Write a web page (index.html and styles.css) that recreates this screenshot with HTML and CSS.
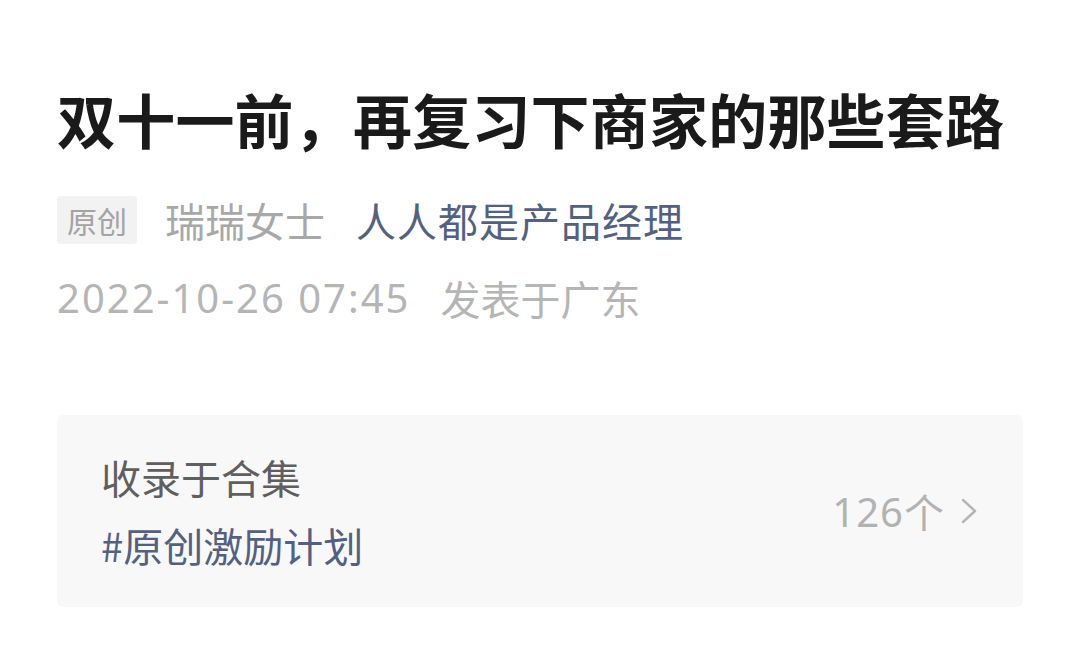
FILE: index.html
```html
<!DOCTYPE html>
<html lang="zh-CN">
<head>
  <meta charset="UTF-8">
  <title>双十一前，再复习下商家的那些套路</title>
  <link rel="stylesheet" href="styles.css">
</head>
<body>

<div class="article">
  <h1 class="title">双十一前，再复习下商家的那些套路</h1>

  <div class="meta">
    <span class="tag">原创</span>
    <span class="author">瑞瑞女士</span>
    <a class="account" href="#">人人都是产品经理</a>
  </div>

  <div class="publish">
    <span class="time">2022-10-26 07:45</span>
    <span class="place">发表于广东</span>
  </div>

  <div class="album">
    <div class="album-info">
      <div class="album-label">收录于合集</div>
      <a class="album-name" href="#">#原创激励计划</a>
    </div>
    <div class="album-count">
      <span class="num">126</span><span>个</span>
      <svg class="arrow" width="18" height="28" viewBox="0 0 18 28">
        <path d="M3 3 L15 14 L3 25" fill="none" stroke="#b5b5b5" stroke-width="2.4" stroke-linecap="round" stroke-linejoin="round"/>
      </svg>
    </div>
  </div>
</div>

</body>
</html>
```

FILE: styles.css
```css
body {
  margin: 0;
  background-color: #fff;
  font-family: "Noto Sans CJK SC", "Noto Sans", sans-serif;
}

.article {
  padding: 82px 54px 0 57px;
}

.title {
  margin: 0;
  font-size: 59px;
  line-height: 74px;
  font-weight: bold;
  color: #1a1a1a;
  letter-spacing: 0.2px;
  white-space: nowrap;
}

.meta {
  display: flex;
  align-items: center;
  margin-top: 40px;
  height: 48px;
  font-size: 40px;
}

.tag {
  display: flex;
  align-items: center;
  height: 48px;
  padding: 0 10px;
  background-color: #f2f2f2;
  border-radius: 4px;
  font-size: 30px;
  color: #a3a3a3;
}

.author {
  margin-left: 28px;
  color: #a8a8a8;
}

.account {
  margin-left: 31px;
  color: #526182;
  text-decoration: none;
  letter-spacing: 1px;
}

.publish {
  display: flex;
  margin-top: 30px;
  font-size: 40px;
  line-height: 48px;
  color: #b5b5b5;
}

.time {
  font-family: "Noto Sans", sans-serif;
  letter-spacing: 2px;
}

.place {
  margin-left: 30px;
}

.album {
  display: flex;
  align-items: center;
  justify-content: space-between;
  margin-top: 93px;
  margin-right: 3px;
  padding: 38px 45px 38px 44px;
  background-color: #f8f8f8;
  border-radius: 6px;
}

.album-label {
  font-size: 40px;
  line-height: 48px;
  color: #5f5f5f;
}

.album-name {
  display: block;
  margin-top: 20px;
  font-size: 40px;
  line-height: 48px;
  color: #526182;
  text-decoration: none;
}

.album-count {
  display: flex;
  align-items: center;
  font-size: 40px;
  color: #b2b2b2;
}

.num {
  font-family: "Noto Sans", sans-serif;
  letter-spacing: 1px;
}

.arrow {
  margin-left: 16px;
}
```
